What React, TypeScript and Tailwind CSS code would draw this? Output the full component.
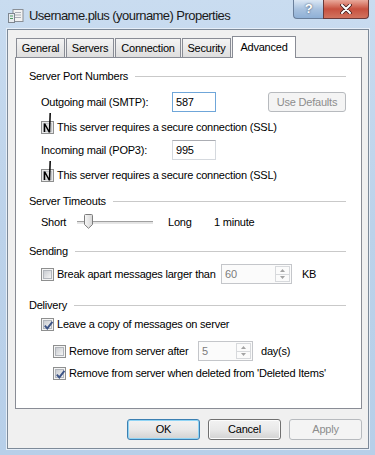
import React from "react";

const Box = ({ checked }: { checked?: boolean }) => (
  <span className="relative flex h-[13px] w-[13px] shrink-0 items-center justify-center border border-[#8e8f8f] bg-[#f4f4f4]">
    <span className="h-[9px] w-[9px] border border-[#b1b5bb] bg-gradient-to-br from-[#c9ccd1] to-[#f4f4f4]" />
    {checked && (
      <svg className="absolute left-[1px] top-[1px]" width="11" height="11" viewBox="0 0 11 11">
        <path d="M1.8 5.6 L4.3 8.4 L9.4 1.8" fill="none" stroke="#3d5486" strokeWidth="1.9" />
      </svg>
    )}
  </span>
);

// the odd-looking checked boxes with the black tick
const SslBox = () => (
  <span className="relative flex h-[13px] w-[13px] shrink-0 items-center justify-center border border-[#8e8f8f] bg-[#e8e8e8]">
    <span className="h-[9px] w-[9px] border border-[#c2c5c9] bg-[#dcdcdc]" />
    <svg className="absolute left-[-1px] top-[-10px]" width="13" height="23" viewBox="0 0 13 23">
      <path d="M3.5 11.5 V20 M3.5 11.5 L8.5 20.5 M8.5 20.5 L9.2 1" fill="none" stroke="#000" strokeWidth="1.5" />
    </svg>
  </span>
);

const Heading = ({ children }: { children: React.ReactNode }) => (
  <div className="flex h-[14px] items-center pr-[15px]">
    <span>{children}</span>
    <span className="ml-[7px] h-px flex-1 bg-[#c9c9c9]" />
  </div>
);

const Spin = ({ value, w }: { value: string; w: string }) => (
  <div className={`flex h-[20px] items-stretch border border-[#c4c6ca] bg-[#fbfbfb] ${w}`}>
    <span className="flex flex-1 items-center pl-[3px] text-[#7c7c7c]">{value}</span>
    <span className="my-[1px] mr-[1px] flex w-[15px] flex-col border border-[#d7d9dc]">
      <span className="flex flex-1 items-center justify-center border-b border-[#d7d9dc]">
        <svg width="5" height="3" viewBox="0 0 5 3">
          <path d="M0 3 L2.5 0 L5 3 Z" fill="#a3a3a3" />
        </svg>
      </span>
      <span className="flex flex-1 items-center justify-center">
        <svg width="5" height="3" viewBox="0 0 5 3">
          <path d="M0 0 L2.5 3 L5 0 Z" fill="#a3a3a3" />
        </svg>
      </span>
    </span>
  </div>
);

const Btn = ({ label, kind }: { label: string; kind?: "default" | "disabled" }) => {
  if (kind === "disabled") {
    return (
      <div className="flex h-[21px] w-[73px] items-center justify-center rounded-[3px] border border-[#b7babe] bg-[#f4f4f4] text-[#8d8d8d]">
        {label}
      </div>
    );
  }
  return (
    <div
      className={`flex h-[21px] w-[73px] items-center justify-center rounded-[3px] border bg-gradient-to-b from-[#f2f2f2] via-[#e9e9e9] to-[#d2d2d2] ${
        kind === "default" ? "border-[#3c7fb1] shadow-[inset_0_0_0_1px_#8fd4f5]" : "border-[#707070] shadow-[inset_0_0_0_1px_#fcfcfc]"
      }`}
    >
      {label}
    </div>
  );
};

const tabs = [
  { name: "General", w: "w-[49px]" },
  { name: "Servers", w: "w-[48px]" },
  { name: "Connection", w: "w-[66px]" },
  { name: "Security", w: "w-[49px]" },
];

export default function App() {
  return (
    <div className="flex h-[455px] w-[375px] flex-col overflow-hidden bg-gradient-to-b from-[#c9dcf0] via-[#bcd2ea] to-[#b7cfe9] font-['Liberation_Sans',Arial,sans-serif] text-[11px] tracking-[-0.22px] text-black">
      {/* title bar */}
      <div className="flex h-[29px] shrink-0 items-start pr-[6px]">
        <svg className="ml-[8px] mt-[8px]" width="16" height="16" viewBox="0 0 16 16">
          <rect x="5" y="1.5" width="10" height="12" fill="#f2f2f2" stroke="#8a8f96" />
          <path d="M7 4.5 H13 M7 7 H13 M7 9.5 H13" stroke="#a9aeb5" />
          <rect x="0.5" y="5.5" width="6" height="9" fill="#e7ebef" stroke="#7e8690" />
          <path d="M2 8 H5 M2 10.5 H5" stroke="#4c9a60" strokeWidth="1.2" />
        </svg>
        <span className="ml-[5px] mt-[6px] text-[13px] tracking-[-0.55px] text-[#1a1a1a]">
          Username.plus (yourname) Properties
        </span>
        <div className="ml-auto flex">
          <div className="flex h-[19px] w-[30px] items-center justify-center rounded-bl-[4px] border border-r-0 border-t-0 border-[#6a7f9b] bg-gradient-to-b from-[#dbe7f4] via-[#a9c2df] to-[#8fb0d6] text-[13px] font-bold text-white [text-shadow:0_0_2px_#2c3e57]">
            ?
          </div>
          <div className="flex h-[19px] w-[46px] items-center justify-center rounded-br-[4px] border border-t-0 border-[#6a3a3a] bg-gradient-to-b from-[#e9a99c] via-[#c7503f] to-[#d1735f]">
            <svg width="14" height="10" viewBox="0 0 14 10">
              <path d="M3 1 L11 9 M11 1 L3 9" stroke="#3e1c1c" strokeWidth="3.6" strokeLinecap="round" />
              <path d="M3 1 L11 9 M11 1 L3 9" stroke="#ffffff" strokeWidth="2" strokeLinecap="round" />
            </svg>
          </div>
        </div>
      </div>

      {/* dialog body */}
      <div className="mb-[6px] ml-[7px] mr-[6px] flex flex-1 flex-col border border-[#7d8a99] bg-[#f0f0f0] pl-[7px] pr-[6px] pt-[6px] shadow-[0_0_0_1px_#e6eef8]">
        {/* tabs */}
        <div className="flex h-[21px] items-end pl-[1px]">
          {tabs.map((t) => (
            <div
              key={t.name}
              className={`mr-px flex h-[19px] items-center justify-center border border-b-0 border-[#898c95] bg-gradient-to-b from-[#f4f4f4] to-[#dedede] ${t.w}`}
            >
              {t.name}
            </div>
          ))}
          <div className="relative z-10 -mb-px flex h-[22px] w-[64px] items-start justify-center border border-b-0 border-[#898c95] bg-white pt-[2px]">
            Advanced
          </div>
        </div>

        {/* tab panel */}
        <div className="flex h-[352px] flex-col border border-[#898c95] bg-white pl-[13px] pt-[11px]">
          <Heading>Server Port Numbers</Heading>

          <div className="mt-[9px] flex h-[20px] items-center pl-[12px] pr-[15px]">
            <span className="w-[131px]">Outgoing mail (SMTP):</span>
            <div className="flex h-[20px] w-[44px] items-center border border-[#6fa6d9] pl-[3px]">587</div>
            <div className="ml-auto flex h-[20px] w-[78px] items-center justify-center rounded-[3px] border border-[#b7babe] bg-[#f4f4f4] text-[#8d8d8d]">
              Use Defaults
            </div>
          </div>

          <div className="mt-[8px] flex h-[14px] items-center pl-[12px]">
            <SslBox />
            <span className="ml-[3px]">This server requires a secure connection (SSL)</span>
          </div>

          <div className="mt-[6px] flex h-[20px] items-center pl-[12px]">
            <span className="w-[131px]">Incoming mail (POP3):</span>
            <div className="flex h-[20px] w-[44px] items-center border border-[#d5d9de] border-t-[#abadb3] pl-[3px]">995</div>
          </div>

          <div className="mt-[8px] flex h-[14px] items-center pl-[12px]">
            <SslBox />
            <span className="ml-[3px]">This server requires a secure connection (SSL)</span>
          </div>

          <div className="mt-[12px]">
            <Heading>Server Timeouts</Heading>
          </div>

          <div className="mt-[7px] flex h-[14px] items-center pl-[12px]">
            <span className="w-[36px]">Short</span>
            <div className="relative flex h-[14px] w-[76px] items-center">
              <span className="h-[3px] w-full border-b border-t border-b-[#e6e6e6] border-t-[#a0a0a0] bg-[#e3e3e3]" />
              <svg className="absolute left-[7px] top-[-1px]" width="9" height="15" viewBox="0 0 9 15">
                <defs>
                  <linearGradient id="th" x1="0" x2="1" y1="0" y2="0">
                    <stop offset="0" stopColor="#f7f7f7" />
                    <stop offset="1" stopColor="#d6d6d6" />
                  </linearGradient>
                </defs>
                <path d="M0.5 1.5 Q0.5 0.5 1.5 0.5 H7.5 Q8.5 0.5 8.5 1.5 V10.5 L4.5 14.3 L0.5 10.5 Z" fill="url(#th)" stroke="#7c7c7c" />
              </svg>
            </div>
            <span className="ml-[15px] w-[46px]">Long</span>
            <span>1 minute</span>
          </div>

          <div className="mt-[15px]">
            <Heading>Sending</Heading>
          </div>

          <div className="mt-[6px] flex h-[20px] items-center pl-[12px]">
            <Box />
            <span className="ml-[3px] w-[164px]">Break apart messages larger than</span>
            <Spin value="60" w="w-[71px]" />
            <span className="ml-[10px]">KB</span>
          </div>

          <div className="mt-[14px]">
            <Heading>Delivery</Heading>
          </div>

          <div className="mt-[5px] flex h-[14px] items-center pl-[12px]">
            <Box checked />
            <span className="ml-[3px]">Leave a copy of messages on server</span>
          </div>

          <div className="mt-[10px] flex h-[20px] items-center pl-[24px]">
            <Box />
            <span className="ml-[3px] w-[129px]">Remove from server after</span>
            <Spin value="5" w="w-[55px]" />
            <span className="ml-[8px]">day(s)</span>
          </div>

          <div className="mt-[5px] flex h-[14px] items-center pl-[24px]">
            <Box checked />
            <span className="ml-[3px]">Remove from server when deleted from 'Deleted Items'</span>
          </div>
        </div>

        {/* buttons */}
        <div className="mt-[10px] flex justify-end gap-[8px]">
          <Btn label="OK" kind="default" />
          <Btn label="Cancel" />
          <Btn label="Apply" kind="disabled" />
        </div>
      </div>
    </div>
  );
}
